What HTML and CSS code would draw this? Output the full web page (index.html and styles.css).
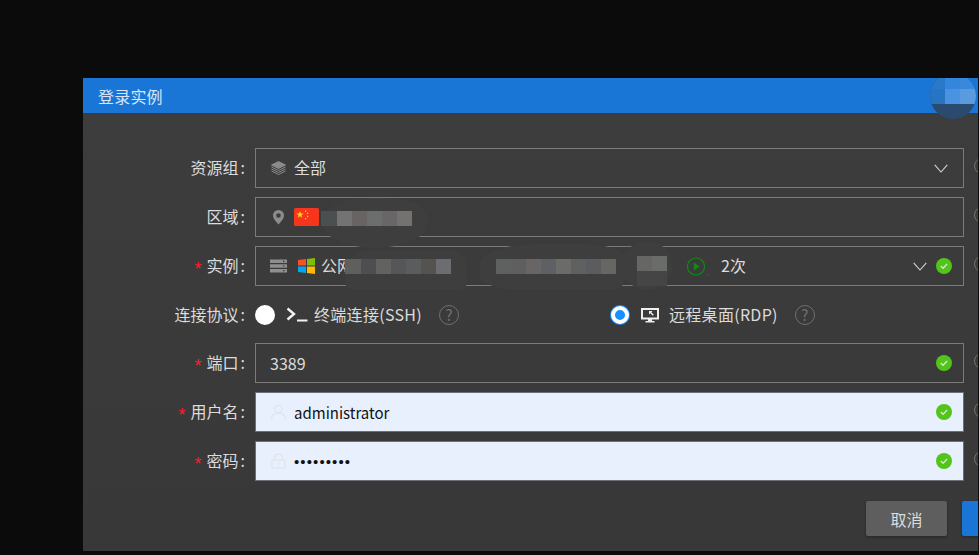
FILE: index.html
```html
<!DOCTYPE html>
<html lang="zh-CN">
<head>
<meta charset="utf-8">
<title>登录实例</title>
<link rel="stylesheet" href="styles.css">
</head>
<body>
<section class="dialog">
  <header class="dialog-head">登录实例</header>
  <div class="dialog-body">
    <div class="row">
      <label class="label">资源组<span class="colon">:</span></label>
      <div class="field">
        <svg class="ico" viewBox="0 0 16 16" fill="none" stroke="#8a8a8a" stroke-width="1"><path d="M8 1.500 15 5 8 8.500 1 5z" fill="#8a8a8a"/><path d="M1 7l7 3.500L15 7M1 9l7 3.500L15 9M1 11l7 3.500 7-3.500"/></svg>
        <span class="value">全部</span>
        <svg class="chev" viewBox="0 0 14 9" fill="none" stroke="#d4d4d4" stroke-width="1.100"><path d="M.7.8 7 8l6.300-7.200"/></svg>
      </div>
      <span class="help side"></span>
    </div>
    <div class="row">
      <label class="label">区域<span class="colon">:</span></label>
      <div class="field">
        <svg class="ico" viewBox="0 0 16 16"><path fill="#8c8c8c" fill-rule="evenodd" d="M8 1a5.500 5.500 0 0 0-5.500 5.500C2.500 10 8 15.500 8 15.500s5.500-5.500 5.500-9A5.500 5.500 0 0 0 8 1zm0 3.200a2.300 2.300 0 1 1 0 4.600 2.300 2.300 0 0 1 0-4.600z"/></svg>
        <svg class="flag" viewBox="0 0 25 18"><rect width="25" height="18" rx="1.500" fill="#f5361c"/><path fill="#ffd21f" d="m6 3 .9 2.600h2.700L7.400 7.200l.8 2.600L6 8.200 3.800 9.800l.8-2.600-2.200-1.600h2.700z"/><path fill="#ffd21f" d="M11 2.500h1.200v1.200H11zM13 4.800h1.200V6H13zM13 7.800h1.200V9H13zM11 10h1.200v1.200H11z"/></svg>
      </div>
      <span class="help side"></span>
    </div>
    <div class="row">
      <label class="label"><i class="req">*</i>实例<span class="colon">:</span></label>
      <div class="field">
        <svg class="ico" viewBox="0 0 17 16"><path fill="#8f8f8f" d="M0 1.500h17v3.600H0zM0 6.200h17v3.600H0zM0 10.900h17v3.600H0z"/><path fill="#3b3b3b" d="M13 2.700h1.500v1.200H13zM13 7.400h1.500v1.200H13zM13 12.100h1.500v1.200H13z"/></svg>
        <svg class="win" viewBox="0 0 17 16"><path fill="#f35325" d="M0 2 8 1v6.600H0z"/><path fill="#81bc06" d="m9 .9 8-.9v7.600H9z"/><path fill="#05a6f0" d="M0 8.500h8V15l-8-.9z"/><path fill="#ffba08" d="M9 8.500h8V16l-8-.9z"/></svg>
        <span class="value name">公网</span>
        <svg class="play" viewBox="0 0 22 19" fill="none"><circle cx="9" cy="9.500" r="8.500" stroke="#0f8a12" stroke-width="1.200"/><path fill="#0f8a12" d="M6.800 5.600 12.800 9.500l-6 3.900z"/><path fill="#0f8a12" d="M20 17h1.200v1.200H20z"/></svg>
        <span class="value count">2次</span>
        <svg class="chev chev-in" viewBox="0 0 14 9" fill="none" stroke="#d4d4d4" stroke-width="1.100"><path d="M.7.8 7 8l6.300-7.200"/></svg>
        <svg class="ok" viewBox="0 0 16 16"><circle cx="8" cy="8" r="8" fill="#52c41a"/><path fill="none" stroke="#d9e8d0" stroke-width="1.300" d="m4.800 8 2.300 2.300 4-4.300"/></svg>
      </div>
      <span class="help side"></span>
    </div>
    <div class="row row-radio">
      <label class="label">连接协议<span class="colon">:</span></label>
      <div class="radios">
        <div class="radio-item first">
          <span class="radio"></span>
          <svg class="r-ico" viewBox="0 0 22 15" fill="none" stroke="#f2f2f2" stroke-width="2.400"><path d="m1.500 1.500 6.500 5.500-6.500 5.500"/><path d="M11 13.500h10.500" stroke-width="2"/></svg>
          <span class="r-text">终端连接(SSH)</span>
          <span class="help"><b>?</b></span>
        </div>
        <div class="radio-item">
          <span class="radio on"></span>
          <svg class="r-ico desk" viewBox="0 0 18 16"><path fill="#eee" fill-rule="evenodd" d="M0 1h18v11.500H11V14h2.500v1.500h-9V14H7v-1.500H0zm2 2v7.500h14V3z"/><path fill="#eee" d="m8 4 3.500 0-1.200 1.200 2.500 2.500-1 1-2.500-2.500L8 7.500z"/></svg>
          <span class="r-text">远程桌面(RDP)</span>
          <span class="help"><b>?</b></span>
        </div>
      </div>
    </div>
    <div class="row">
      <label class="label"><i class="req">*</i>端口<span class="colon">:</span></label>
      <div class="field">
        <span class="value latin">3389</span>
        <svg class="ok end" viewBox="0 0 16 16"><circle cx="8" cy="8" r="8" fill="#52c41a"/><path fill="none" stroke="#d9e8d0" stroke-width="1.300" d="m4.800 8 2.300 2.300 4-4.300"/></svg>
      </div>
      <span class="help side"></span>
    </div>
    <div class="row">
      <label class="label"><i class="req">*</i>用户名<span class="colon">:</span></label>
      <div class="field filled">
        <svg class="ico" viewBox="0 0 16 16" fill="none" stroke="#dfe2e8" stroke-width="1.100"><circle cx="8" cy="5" r="3.800"/><path d="M1 15c.5-3.800 3.200-6 7-6s6.500 2.200 7 6"/></svg>
        <span class="value latin user">administrator</span>
        <svg class="ok end" viewBox="0 0 16 16"><circle cx="8" cy="8" r="8" fill="#52c41a"/><path fill="none" stroke="#d9e8d0" stroke-width="1.300" d="m4.800 8 2.300 2.300 4-4.300"/></svg>
      </div>
      <span class="help side"></span>
    </div>
    <div class="row">
      <label class="label"><i class="req">*</i>密码<span class="colon">:</span></label>
      <div class="field filled">
        <svg class="ico" viewBox="0 0 16 16" fill="none" stroke="#dfe2e8" stroke-width="1.100"><rect x="1.500" y="7" width="13" height="8"/><path d="M4 7V4.500a3.200 3.200 0 0 1 3.200-3.200h1.600A3.200 3.200 0 0 1 12 4.500V7M8 10v2"/></svg>
        <span class="value dots">•••••••••</span>
        <svg class="ok end" viewBox="0 0 16 16"><circle cx="8" cy="8" r="8" fill="#52c41a"/><path fill="none" stroke="#d9e8d0" stroke-width="1.300" d="m4.800 8 2.300 2.300 4-4.300"/></svg>
      </div>
      <span class="help side"></span>
    </div>
    <footer class="actions">
      <button class="btn">取消</button>
      <button class="btn primary"></button>
    </footer>
  </div>

  <div class="blob b-region"></div>
  <div class="blob b-name1"></div>
  <div class="blob b-name2"></div>
  <div class="blob b-name3"></div>
  <div class="mosaic m-region"></div>
  <div class="mosaic m-name1"></div>
  <div class="mosaic m-name2"></div>
  <div class="mosaic m-name3"></div>
  <div class="mosaic m-name3b"></div>
  <div class="avatar"><div class="avatar-tiles"></div></div>
</section>
</body>
</html>
```
FILE: styles.css
```css
* { box-sizing: border-box; }
html, body { margin: 0; height: 100%; }
body {
  background: #0b0b0b;
  overflow: hidden;
  font-family: "Noto Sans CJK SC", "Noto Sans", sans-serif;
  font-size: 16px;
  color: #dcdcdc;
  padding: 78px 1px 0 83px;
}
.dialog {
  position: relative;
  height: 473px;
  overflow: hidden;
  background: linear-gradient(#3d3d3d, #383838);
}
.dialog-head {
  height: 35px;
  background: #1976d6;
  color: #d6e6f6;
  font-size: 16px;
  line-height: 37px;
  padding-left: 15px;
  letter-spacing: .2px;
}
.dialog-body {
  padding-top: 35px;
  display: flex;
  flex-direction: column;
  gap: 9px;
}
.row {
  display: grid;
  grid-template-columns: 164px 709px auto;
  column-gap: 8px;
  height: 40px;
  align-items: center;
}
.row.row-radio { height: 39px; }
.row .field, .row .radios { grid-column: 2; }
.label { text-align: right; white-space: nowrap; padding-bottom: 2px; }
.colon { margin: 0 2px 0 2px; }
.req {
  color: #f5222d;
  font-style: normal;
  font-size: 18px;
  line-height: 1;
  vertical-align: -3px;
  margin-right: 5px;
  font-family: "Liberation Sans", sans-serif;
}
.field {
  height: 40px;
  border: 1px solid #7b7b7b;
  display: flex;
  align-items: center;
  padding: 0 14px;
}
.value { padding-bottom: 2px; }
.value.latin { padding-bottom: 0; }
.field.filled { background: #e8f0fe; border-color: #6d6f76; color: #111; }
.ico { width: 17px; height: 16px; flex: none; margin-right: 7px; }
.flag { width: 25px; height: 18px; flex: none; }
.win { width: 17px; height: 16px; flex: none; margin: 0 6px 0 4px; }
.name { width: 366px; flex: none; white-space: nowrap; }
.play { width: 22px; height: 19px; flex: none; margin-right: 12px; }
.chev { width: 14px; height: 9px; margin-left: auto; flex: none; margin-right: 1px; }
.chev-in { margin-right: 9px; }
.ok { width: 16px; height: 16px; flex: none; margin-right: -3px; }
.ok.end { margin-left: auto; }
.user { font-size: 15px; }
.dots { font-family: "Liberation Sans", sans-serif; letter-spacing: 1.100px; font-size: 15px; padding-bottom: 0; }
.radios { display: flex; height: 39px; align-items: center; }
.radio-item { display: flex; align-items: center; }
.radio-item.first { width: 355px; }
.radio {
  width: 20px;
  height: 20px;
  border-radius: 50%;
  background: #fff;
  flex: none;
  margin-right: 11px;
}
.radio.on {
  width: 18px;
  height: 18px;
  margin: 0 12px 0 1px;
  border: 4px solid #fff;
  background: #1890ff;
  box-shadow: 0 0 0 1px #1890ff;
}
.r-ico { width: 22px; height: 15px; flex: none; margin-right: 7px; }
.r-ico.desk { width: 18px; height: 16px; margin-right: 9px; }
.r-text { padding-bottom: 2px; white-space: nowrap; letter-spacing: .3px; }
.r-ico { margin-right: 6px; }
.r-ico.desk { margin-right: 10px; }
.help {
  width: 20px;
  height: 20px;
  border-radius: 50%;
  border: 1.500px solid #707070;
  margin-left: 17px;
  flex: none;
  display: flex;
  align-items: center;
  justify-content: center;
  color: #707070;
  font-size: 15px;
}
.help b { font-weight: 400; }
.help.side { grid-column: 3; margin: -5px 0 0 2px; width: 16px; height: 16px; border-color: #77706a; }
.actions {
  display: flex;
  justify-content: flex-end;
  gap: 15px;
  padding-top: 11px;
  margin-right: -65px;
}
.btn {
  width: 81px;
  height: 35px;
  flex: none;
  border: 0;
  border-radius: 2px;
  background: #5e5e5e;
  color: #dcdcdc;
  font: inherit;
  box-shadow: 0 1px 3px rgba(0, 0, 0, .35);
}
.btn.primary { background: #1976d6; color: #fff; }

/* privacy smudges painted over the screenshot */
.blob { position: absolute; background: #3e3e3e; }
.b-region { left: 239px; top: 120px; width: 106px; height: 50px; border-radius: 45% 40% 50% 50%; }
.b-name1 { left: 262px; top: 172px; width: 122px; height: 40px; border-radius: 24px 16px 8px 8px; }
.b-name2 { left: 397px; top: 166px; width: 145px; height: 46px; border-radius: 40% 30% 12px 30%; }
.b-name3 { left: 539px; top: 163px; width: 50px; height: 49px; border-radius: 50%; }
.mosaic { position: absolute; height: 15px; }
.m-region {
  left: 238px; top: 133px; width: 91px;
  background: linear-gradient(90deg, #4a4f50 0 16px, #737373 16px 31px, #686464 31px 46px, #6b6e6d 46px 61px, #696667 61px 76px, #737271 76px);
}
.m-name1 {
  left: 262px; top: 181px; width: 106px;
  background: linear-gradient(90deg, #5f5f5d 0 16px, #4c4e52 16px 31px, #62625e 31px 46px, #55565a 46px 61px, #5b5c5e 61px 76px, #55534f 76px 91px, #6b6d70 91px);
}
.m-name2 {
  left: 413px; top: 181px; width: 120px;
  background: linear-gradient(90deg, #5e6160 0 15px, #5d605f 15px 30px, #6a6565 30px 45px, #5d6064 45px 60px, #6b6b68 60px 75px, #5f6060 75px 90px, #5b5c60 90px 105px, #666663 105px);
}
.m-name3 {
  left: 554px; top: 178px; width: 30px;
  background: linear-gradient(90deg, #666664 0 15px, #6a6c6a 15px);
}
.m-name3b { left: 554px; top: 193px; width: 30px; background: #454545; }
.avatar {
  position: absolute;
  left: 847px;
  top: -5px;
  width: 46px;
  height: 46px;
  border-radius: 50%;
  background: #2b4a70;
  overflow: hidden;
}
.avatar-tiles {
  height: 31px;
  background:
    linear-gradient(90deg, #10253a 0 100%) top / 100% 5px no-repeat,
    linear-gradient(90deg, #2a78c8 0 15px, #3585dc 15px 30px, #3a88dd 30px) 0 5px / 100% 11px no-repeat,
    linear-gradient(90deg, #2774c4 0 15px, #4a93e0 15px 30px, #5a9be0 30px) 0 16px / 100% 15px no-repeat;
}
```
